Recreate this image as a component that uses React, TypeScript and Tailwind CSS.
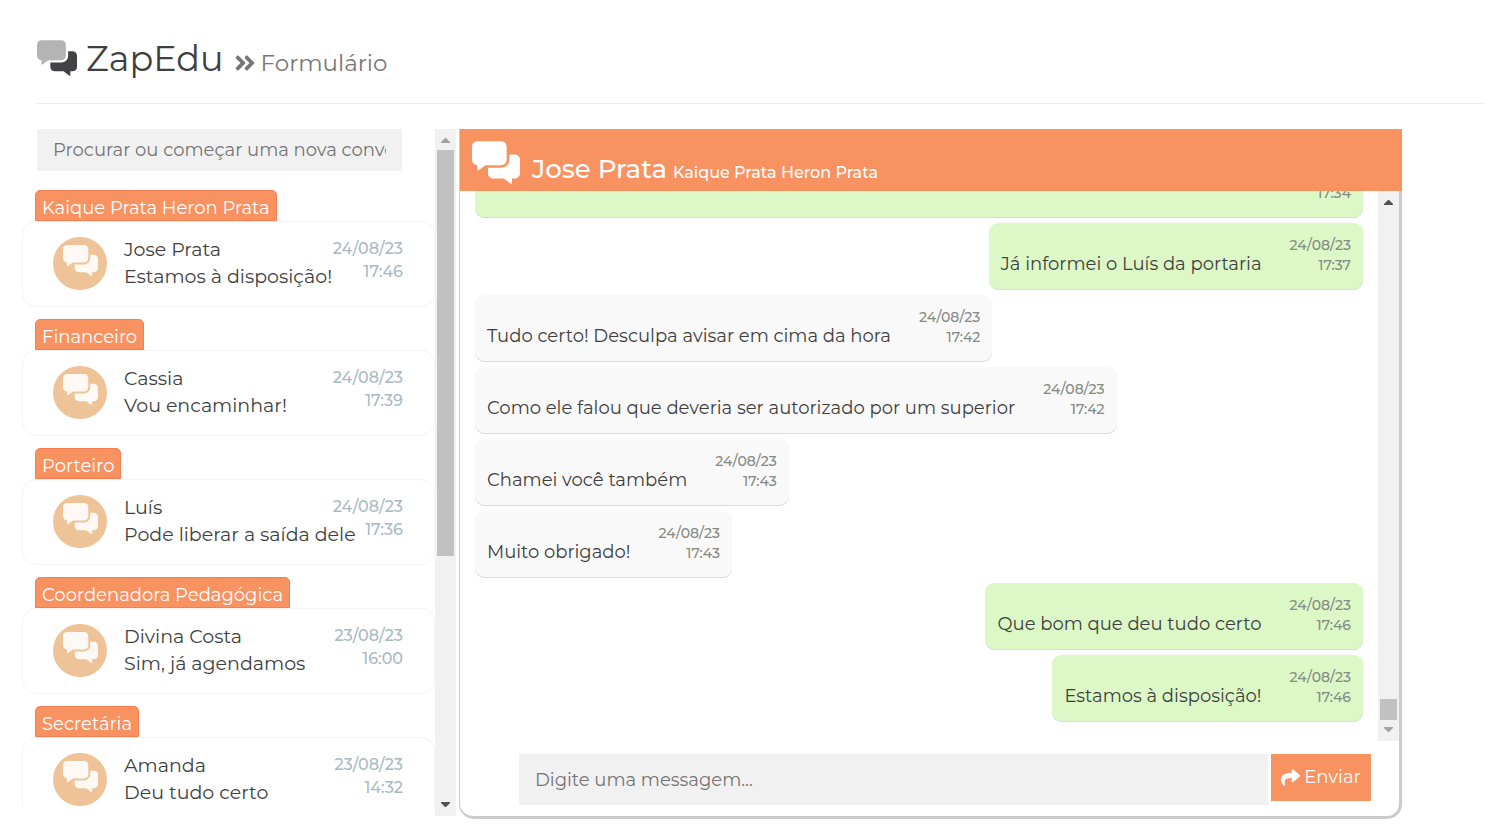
import React from "react";
import { FaAngleDoubleRight, FaShare } from "react-icons/fa";

type Conversation = {
  group: string;
  name: string;
  last: string;
  date: string;
  time: string;
};

type Message = {
  text: string;
  date: string;
  time: string;
  mine?: boolean;
  full?: boolean;
};

const conversations: Conversation[] = [
  { group: "Kaique Prata Heron Prata", name: "Jose Prata", last: "Estamos à disposição!", date: "24/08/23", time: "17:46" },
  { group: "Financeiro", name: "Cassia", last: "Vou encaminhar!", date: "24/08/23", time: "17:39" },
  { group: "Porteiro", name: "Luís", last: "Pode liberar a saída dele", date: "24/08/23", time: "17:36" },
  { group: "Coordenadora Pedagógica", name: "Divina Costa", last: "Sim, já agendamos", date: "23/08/23", time: "16:00" },
  { group: "Secretária", name: "Amanda", last: "Deu tudo certo", date: "23/08/23", time: "14:32" },
];

const messages: Message[] = [
  { text: "", date: "", time: "17:34", mine: true, full: true },
  { text: "Já informei o Luís da portaria", date: "24/08/23", time: "17:37", mine: true },
  { text: "Tudo certo! Desculpa avisar em cima da hora", date: "24/08/23", time: "17:42" },
  { text: "Como ele falou que deveria ser autorizado por um superior", date: "24/08/23", time: "17:42" },
  { text: "Chamei você também", date: "24/08/23", time: "17:43" },
  { text: "Muito obrigado!", date: "24/08/23", time: "17:43" },
  { text: "Que bom que deu tudo certo", date: "24/08/23", time: "17:46", mine: true },
  { text: "Estamos à disposição!", date: "24/08/23", time: "17:46", mine: true },
];

function CommentsIcon({ className, backClassName }: { className: string; backClassName?: string }) {
  return (
    <svg viewBox="0 0 576 512" fill="currentColor" aria-hidden="true" className={className}>
      <path
        className={backClassName}
        d="M416 224V64c0-35.3-28.7-64-64-64H64C28.7 0 0 28.7 0 64v160c0 35.3 28.7 64 64 64v54.2c0 8 9.1 12.6 15.5 7.8l82.8-62.1H352c35.3.1 64-28.6 64-63.9z"
      />
      <path d="M512 160h-64v64c0 52.9-43.1 96-96 96H192v64c0 35.3 28.7 64 64 64h125.7l82.8 62.1c6.4 4.8 15.5.2 15.5-7.8V448h32c35.3 0 64-28.7 64-64V224c0-35.3-28.7-64-64-64z" />
    </svg>
  );
}

function Arrow({ up, className }: { up?: boolean; className: string }) {
  return (
    <svg viewBox="0 0 9 5" fill="currentColor" aria-hidden="true" className={className}>
      <path d={up ? "M4 0h1l4 4v1H0V4z" : "M0 0h9v1L5 5H4L0 1z"} />
    </svg>
  );
}

function ConversationItem({ item }: { item: Conversation }) {
  return (
    <li>
      <span className="ml-[13px] inline-flex h-[31px] items-center rounded-t-[5px] border border-[#f67e50] bg-[#f99261] px-[6px] pt-[5px] align-top text-[18px] leading-6 text-white">
        {item.group}
      </span>
      <div className="flex h-[86px] items-start rounded-[14px] border border-[#f3f3f3] pr-[31px] pl-[30px]">
        <div className="mt-[15px] flex h-[53px] w-[54px] shrink-0 items-center justify-center rounded-full bg-[#efc398]">
          <CommentsIcon className="mb-[6px] ml-px h-[31px] w-[35px] text-[#fef9f4]" />
        </div>
        <div className="mt-[14px] ml-[17px] w-0 flex-1 text-[19px] leading-[27px] whitespace-nowrap text-[#3f3f3f]">
          <p>{item.name}</p>
          <p>{item.last}</p>
        </div>
        <div className="mt-[15px] text-right text-[16px] leading-[23px] font-medium text-[#a9bac2]">
          <p>{item.date}</p>
          <p>{item.time}</p>
        </div>
      </div>
    </li>
  );
}

function MessageBubble({ message }: { message: Message }) {
  const side = message.mine ? "self-end bg-[#dcf8c6]" : "self-start bg-[#f9f9f9]";
  const width = message.full ? "w-full" : "";
  return (
    <li className={`flex h-[66px] shrink-0 justify-between gap-7 rounded-[9px] px-3 shadow-[0_1px_0_#d8dcd6] ${side} ${width}`}>
      <p className="mt-[28px] text-[18px] leading-[26px] whitespace-nowrap text-[#3f3f3f]">{message.text}</p>
      <div className="flex flex-col justify-end pb-[14px] text-right text-[14px] leading-5 font-medium text-[#858b84]">
        <p>{message.date}</p>
        <p>{message.time}</p>
      </div>
    </li>
  );
}

export default function App() {
  return (
    <div className="flex h-screen flex-col overflow-hidden bg-white font-['Montserrat','Inter',sans-serif] text-[#3f3f3f]">
      <header className="mr-[3px] ml-[37px] flex h-[104px] shrink-0 items-start border-b border-[#ebebeb] pt-[37px]">
        <CommentsIcon className="mt-[3px] h-[36px] w-[40px] text-[#434345]" backClassName="text-[#b4b4b4] fill-current" />
        <h1 className="ml-[9px] flex items-baseline">
          <span className="text-[35px] leading-[44px]">ZapEdu</span>
          <FaAngleDoubleRight className="mt-[7px] ml-[9px] h-[24px] w-[24px] self-center text-[#777]" />
          <span className="ml-[4px] text-[23px] text-[#777]">Formulário</span>
        </h1>
      </header>

      <main className="mr-[86px] ml-[22px] flex min-h-0 flex-1 pt-[25px] pb-[17px]">
        <aside className="mb-[3px] flex w-[434px] shrink-0">
          <div className="mb-[9px] flex w-[413px] flex-col overflow-hidden">
            <input
              type="text"
              aria-label="Procurar conversa"
              placeholder="Procurar ou começar uma nova conversa"
              className="mr-[33px] ml-[15px] h-[42px] shrink-0 bg-[#f1f1f1] px-4 text-[18px] outline-none placeholder:text-[#757575]"
            />
            <ul className="mt-[19px] flex flex-col gap-3">
              {conversations.map((item) => (
                <ConversationItem key={item.group} item={item} />
              ))}
            </ul>
          </div>
          <div className="flex w-[21px] flex-col items-center bg-[#f1f1f1]">
            <Arrow up className="mt-[9px] h-[5px] w-[9px] text-[#a3a3a3]" />
            <div className="mt-[7px] h-[406px] w-[17px] bg-[#c1c1c1]" />
            <Arrow className="mt-auto mb-[9px] h-[5px] w-[9px] text-[#505050]" />
          </div>
        </aside>

        <section className="ml-[3px] flex min-w-0 flex-1 flex-col rounded-b-[15px] border-r-[3px] border-b-[3px] border-l border-[#cbcbcb]">
          <div className="-mr-[3px] flex h-[62px] shrink-0 items-start bg-[#f99261] pt-3 pl-3 text-white">
            <CommentsIcon className="h-[43px] w-12" />
            <h2 className="ml-3 flex items-baseline gap-[6px] pt-2 font-medium">
              <span className="text-[26px] leading-[40px]">Jose Prata</span>
              <span className="text-[16px]">Kaique Prata Heron Prata</span>
            </h2>
          </div>

          <div className="flex h-[550px] min-h-0 flex-1 overflow-hidden">
            <ul className="flex min-w-0 flex-1 flex-col justify-end gap-[6px] pr-[15px] pb-5 pl-[15px]">
              {messages.map((message) => (
                <MessageBubble key={message.text} message={message} />
              ))}
            </ul>
            <div className="flex w-[21px] flex-col items-center bg-[#f1f1f1]">
              <Arrow up className="mt-[9px] h-[5px] w-[9px] text-[#505050]" />
              <div className="mt-auto h-[21px] w-[17px] bg-[#c1c1c1]" />
              <Arrow className="mt-[7px] mb-[9px] h-[5px] w-[9px] text-[#a3a3a3]" />
            </div>
          </div>

          <form className="mt-[13px] mr-7 mb-[11px] ml-[59px] flex items-start gap-[3px]" onSubmit={(event) => event.preventDefault()}>
            <input
              type="text"
              aria-label="Mensagem"
              placeholder="Digite uma messagem..."
              className="h-[51px] min-w-0 flex-1 bg-[#f1f1f1] px-4 text-[18px] outline-none placeholder:text-[#757575]"
            />
            <button type="submit" className="flex h-[47px] w-[100px] items-center justify-center gap-[4px] bg-[#f99261] text-[18px] text-white">
              <FaShare className="h-[19px] w-[19px]" />
              Enviar
            </button>
          </form>
        </section>
      </main>
    </div>
  );
}
